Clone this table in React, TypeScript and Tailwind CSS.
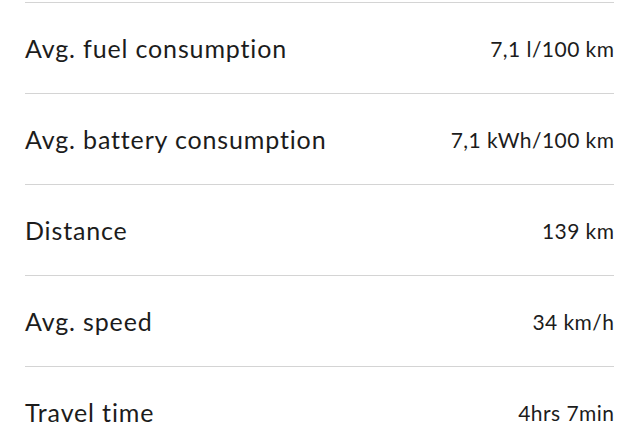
const rows = [
  { label: "Avg. fuel consumption", value: "7,1 l/100 km" },
  { label: "Avg. battery consumption", value: "7,1 kWh/100 km" },
  { label: "Distance", value: "139 km" },
  { label: "Avg. speed", value: "34 km/h" },
  { label: "Travel time", value: "4hrs 7min" },
];

export default function App() {
  return (
    <div className="w-[640px] h-[444px] overflow-hidden bg-white pt-[2px] font-['Lato',sans-serif]">
      <div className="ml-[25px] mr-[26px]">
        {rows.map((row) => (
          <div
            key={row.label}
            className="flex items-center justify-between h-[91px] border-t border-[#d4d4d4] pt-[2px]"
          >
            <span className="text-[25px] text-[#1c1c1c] tracking-[0.85px]">{row.label}</span>
            <span className="text-[21px] text-[#1c1c1c] tracking-[0.45px] -mr-[0.45px]">{row.value}</span>
          </div>
        ))}
      </div>
    </div>
  );
}
